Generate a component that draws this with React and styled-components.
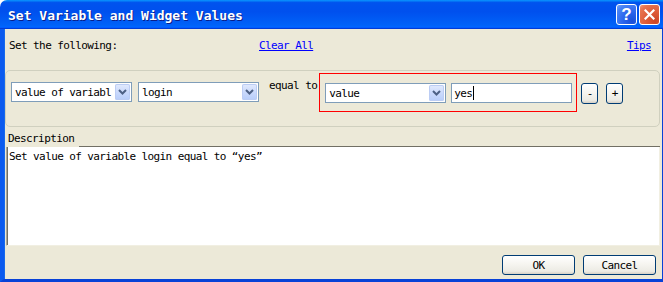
import React from 'react';
import styled, { createGlobalStyle } from 'styled-components';

const GlobalStyle = createGlobalStyle`
  html, body { margin: 0; padding: 0; background: #ffffff; }
  body {
    font-family: "DejaVu Sans Mono", "Liberation Mono", monospace;
    font-size: 11px;
    letter-spacing: -0.6px;
    color: #000;
  }
`;

const Window = styled.div`
  width: 663px;
  height: 282px;
  display: flex;
  flex-direction: column;
  overflow: hidden;
`;

const TitleBar = styled.div`
  height: 29px;
  flex: none;
  display: flex;
  align-items: center;
  padding: 0 3px 0 8px;
  border-top-left-radius: 7px;
  background: linear-gradient(180deg, #0997ff 0, #0053ee 9%, #0050ee 40%, #0062f8 86%, #0066ff 92%, #005bff 95%, #003dd7 97%, #003dd7 100%);
`;

const Title = styled.div`
  flex: 1;
  color: #fff;
  font-size: 13px;
  font-weight: bold;
  letter-spacing: 0;
  text-shadow: 1px 1px #0a1e8a;
  margin-top: 1px;
`;

const CaptionButton = styled.button`
  width: 21px;
  height: 21px;
  padding: 0;
  margin-left: 2px;
  border: 1px solid #fff;
  border-radius: 3px;
  display: flex;
  align-items: center;
  justify-content: center;
  background: ${p => p.$close
    ? 'radial-gradient(circle at 80% 85%, #cc4627 0, #dd5a38 40%, #e7744f 80%, #f19b7c 100%)'
    : 'radial-gradient(circle at 80% 85%, #1a4fd8 0, #2a64ec 40%, #4a84f5 80%, #79a6fa 100%)'};
  color: #fff;
  font-family: "Liberation Sans", Arial, sans-serif;
  font-size: 17px;
  font-weight: bold;
  letter-spacing: 0;
`;

const Client = styled.div`
  flex: 1;
  display: flex;
  flex-direction: column;
  background: #ece9d8;
  border-left: 4px solid #0b5aef;
  border-right: 1px solid #0842d7;
  border-bottom: 3px solid #0842d7;
  box-shadow: inset 1px 0 #166aee;
  padding-bottom: 4px;
`;

const Header = styled.div`
  display: grid;
  grid-template-columns: 250px auto 1fr auto;
  margin-top: 10px;
  height: 14px;
  line-height: 14px;
  padding: 0 11px 0 5px;
`;

const Link = styled.a`
  color: #0000ff;
  text-decoration: underline;
  cursor: pointer;
  grid-column: ${p => p.$col};
`;

const Panel = styled.div`
  margin: 17px 2px 0 1px;
  height: 57px;
  box-sizing: border-box;
  border: 1px solid #d0d0bf;
  border-radius: 5px;
  display: flex;
  align-items: flex-start;
  padding: 2px 0 0 5px;
`;

const Combo = styled.div`
  width: 121px;
  height: 20px;
  box-sizing: border-box;
  border: 1px solid #7f9db9;
  background: #fff;
  display: flex;
  align-items: center;
  margin-top: ${p => p.$top || 0}px;
  margin-left: ${p => p.$left || 0}px;
`;

const ComboText = styled.span`
  flex: 1;
  padding-left: 3px;
  white-space: nowrap;
  overflow: hidden;
`;

const ComboButton = styled.span`
  width: 15px;
  height: 16px;
  margin: 0 1px;
  border-radius: 2px;
  background: linear-gradient(180deg, #e3ebfd 0, #cbdafc 50%, #b7cdfa 100%);
  box-shadow: inset 0 0 0 1px #bccdf4;
  display: flex;
  align-items: center;
  justify-content: center;
`;

const Label = styled.span`
  margin: 6px 0 0 10px;
  line-height: 14px;
  white-space: nowrap;
`;

const Highlight = styled.div`
  margin-left: 2px;
  border: 1px solid #ff0000;
  display: flex;
  gap: 5px;
  padding: 9px 4px 8px 5px;
`;

const TextInput = styled.div`
  width: 121px;
  height: 20px;
  box-sizing: border-box;
  border: 1px solid #7f9db9;
  background: #fff;
  display: flex;
  align-items: center;
  padding-left: 2px;
`;

const Caret = styled.span`
  display: inline-block;
  width: 1px;
  height: 14px;
  background: #000;
  margin-left: 1px;
`;

const XpButton = styled.button`
  width: ${p => p.$w}px;
  height: ${p => p.$h}px;
  margin-top: ${p => p.$top || 0}px;
  margin-left: ${p => p.$left || 0}px;
  padding: 0;
  box-sizing: border-box;
  border: 1px solid #003c74;
  border-radius: 3px;
  background: linear-gradient(180deg, #ffffff 0, #f6f5f0 45%, #ecebe4 85%, #d6d0c5 100%);
  font-family: inherit;
  font-size: 11px;
  letter-spacing: -0.6px;
  color: #000;
  display: flex;
  align-items: center;
  justify-content: center;
`;

const TabRow = styled.div`
  margin: 3px 2px 0 2px;
  height: 17px;
  display: flex;
`;

const Tab = styled.div`
  width: 73px;
  padding: 3px 0 0 2px;
  line-height: 12px;
  box-sizing: border-box;
`;

const TabLine = styled.div`
  flex: 1;
  border-bottom: 1px solid #716f64;
  box-shadow: 0 1px #aca899;
`;

const Description = styled.div`
  flex: 1;
  margin: 0 2px;
  background: #fff;
  border-left: 1px solid #aca899;
  border-right: 1px solid #f1efe2;
  border-bottom: 1px solid #f1efe2;
  box-shadow: inset 1px 0 #716f64;
  padding: 3px 0 0 2px;
  line-height: 14px;
`;

const Footer = styled.div`
  display: flex;
  justify-content: flex-end;
  gap: 8px;
  margin-top: 9px;
  padding-right: 6px;
`;

const Chevron = () => (
  <svg width="9" height="6" viewBox="0 0 9 6">
    <path d="M1 1 L4.5 4.5 L8 1" fill="none" stroke="#4d6185" strokeWidth="2" />
  </svg>
);

const CloseIcon = () => (
  <svg width="11" height="11" viewBox="0 0 11 11">
    <path d="M1.5 1.5 L9.5 9.5 M9.5 1.5 L1.5 9.5" stroke="#fff" strokeWidth="2.2" strokeLinecap="square" />
  </svg>
);

const ComboBox = ({ value, top, left }) => (
  <Combo $top={top} $left={left}>
    <ComboText>{value}</ComboText>
    <ComboButton><Chevron /></ComboButton>
  </Combo>
);

export default function App() {
  return (
    <Window>
      <GlobalStyle />
      <TitleBar>
        <Title>Set Variable and Widget Values</Title>
        <CaptionButton>?</CaptionButton>
        <CaptionButton $close><CloseIcon /></CaptionButton>
      </TitleBar>
      <Client>
        <Header>
          <span>Set the following:</span>
          <Link $col={2}>Clear All</Link>
          <Link $col={4}>Tips</Link>
        </Header>
        <Panel>
          <ComboBox value="value of variabl" top={9} />
          <ComboBox value="login" top={9} left={6} />
          <Label>equal to</Label>
          <Highlight>
            <ComboBox value="value" />
            <TextInput>yes<Caret /></TextInput>
          </Highlight>
          <XpButton $w={17} $h={21} $top={10} $left={4}>-</XpButton>
          <XpButton $w={17} $h={21} $top={10} $left={8}>+</XpButton>
        </Panel>
        <TabRow>
          <Tab>Description</Tab>
          <TabLine />
        </TabRow>
        <Description>Set value of variable login equal to “yes”</Description>
        <Footer>
          <XpButton $w={73} $h={20}>OK</XpButton>
          <XpButton $w={73} $h={20}>Cancel</XpButton>
        </Footer>
      </Client>
    </Window>
  );
}
